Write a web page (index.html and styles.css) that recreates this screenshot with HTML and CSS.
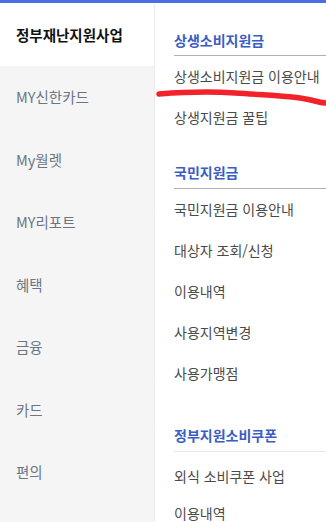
FILE: index.html
```html
<!DOCTYPE html>
<html lang="ko">
<head>
    <meta charset="UTF-8">
    <meta name="viewport" content="width=device-width, initial-scale=1.0">
    <title>전체메뉴</title>
    <link rel="stylesheet" href="styles.css">
</head>
<body>
    <div class="topbar"></div>
    <div class="menu">
        <ul class="side">
            <li class="side-item active">정부재난지원사업</li>
            <li class="side-item">MY신한카드</li>
            <li class="side-item">My월렛</li>
            <li class="side-item">MY리포트</li>
            <li class="side-item">혜택</li>
            <li class="side-item">금융</li>
            <li class="side-item">카드</li>
            <li class="side-item">편의</li>
        </ul>
        <div class="detail">
            <div class="section first">
                <div class="section-title">상생소비지원금</div>
                <ul>
                    <li>상생소비지원금 이용안내</li>
                    <li>상생지원금 꿀팁</li>
                </ul>
            </div>
            <div class="section">
                <div class="section-title">국민지원금</div>
                <ul>
                    <li>국민지원금 이용안내</li>
                    <li>대상자 조회/신청</li>
                    <li>이용내역</li>
                    <li>사용지역변경</li>
                    <li>사용가맹점</li>
                </ul>
            </div>
            <div class="section last">
                <div class="section-title">정부지원소비쿠폰</div>
                <ul>
                    <li>외식 소비쿠폰 사업</li>
                    <li>이용내역</li>
                </ul>
            </div>
        </div>
    </div>
    <svg class="scribble" width="171" height="24" viewBox="0 0 171 24">
        <path d="M4 8 C 30 6, 50 5, 80 7 S 125 9, 145 12 S 163 17, 171 17" fill="none" stroke="#f2222b" stroke-width="5.5" stroke-linecap="round"/>
    </svg>
</body>
</html>
```

FILE: styles.css
```css
html, body {
    margin: 0;
    padding: 0;
    height: 100%;
    background: #fff;
    font-family: "Noto Sans CJK KR", "Noto Sans", sans-serif;
    overflow: hidden;
}

ul {
    list-style: none;
    margin: 0;
    padding: 0;
}

.topbar {
    height: 3px;
    background: #4c6ee0;
}

.menu {
    display: flex;
    height: calc(100% - 3px);
}

.side {
    width: 154px;
    flex-shrink: 0;
    background: #f5f5f5;
    border-right: 1px solid #ececec;
}

.side-item {
    height: 62.5px;
    line-height: 62.5px;
    padding-left: 16px;
    font-size: 14.5px;
    color: #6c7582;
}

.side-item.active {
    height: 63px;
    line-height: 63px;
    background: #fff;
    color: #111;
    font-weight: 700;
}

.detail {
    flex: 1;
    padding-left: 19px;
}

.section-title {
    padding-top: 24px;
    padding-bottom: 6px;
    line-height: 20px;
    font-size: 14px;
    font-weight: 700;
    color: #3a5cc5;
    border-bottom: 1px solid #a7b2c2;
}

.section.first .section-title {
    padding-top: 27px;
    padding-bottom: 5px;
}

.section.last .section-title {
    padding-top: 31px;
    border-bottom-color: #e2e8ef;
}

.section li {
    height: 41px;
    line-height: 41px;
    font-size: 14px;
    color: #4a4a4a;
    white-space: nowrap;
}

.section.last li:first-child {
    line-height: 48px;
}

.scribble {
    position: absolute;
    left: 155px;
    top: 86px;
}
```
